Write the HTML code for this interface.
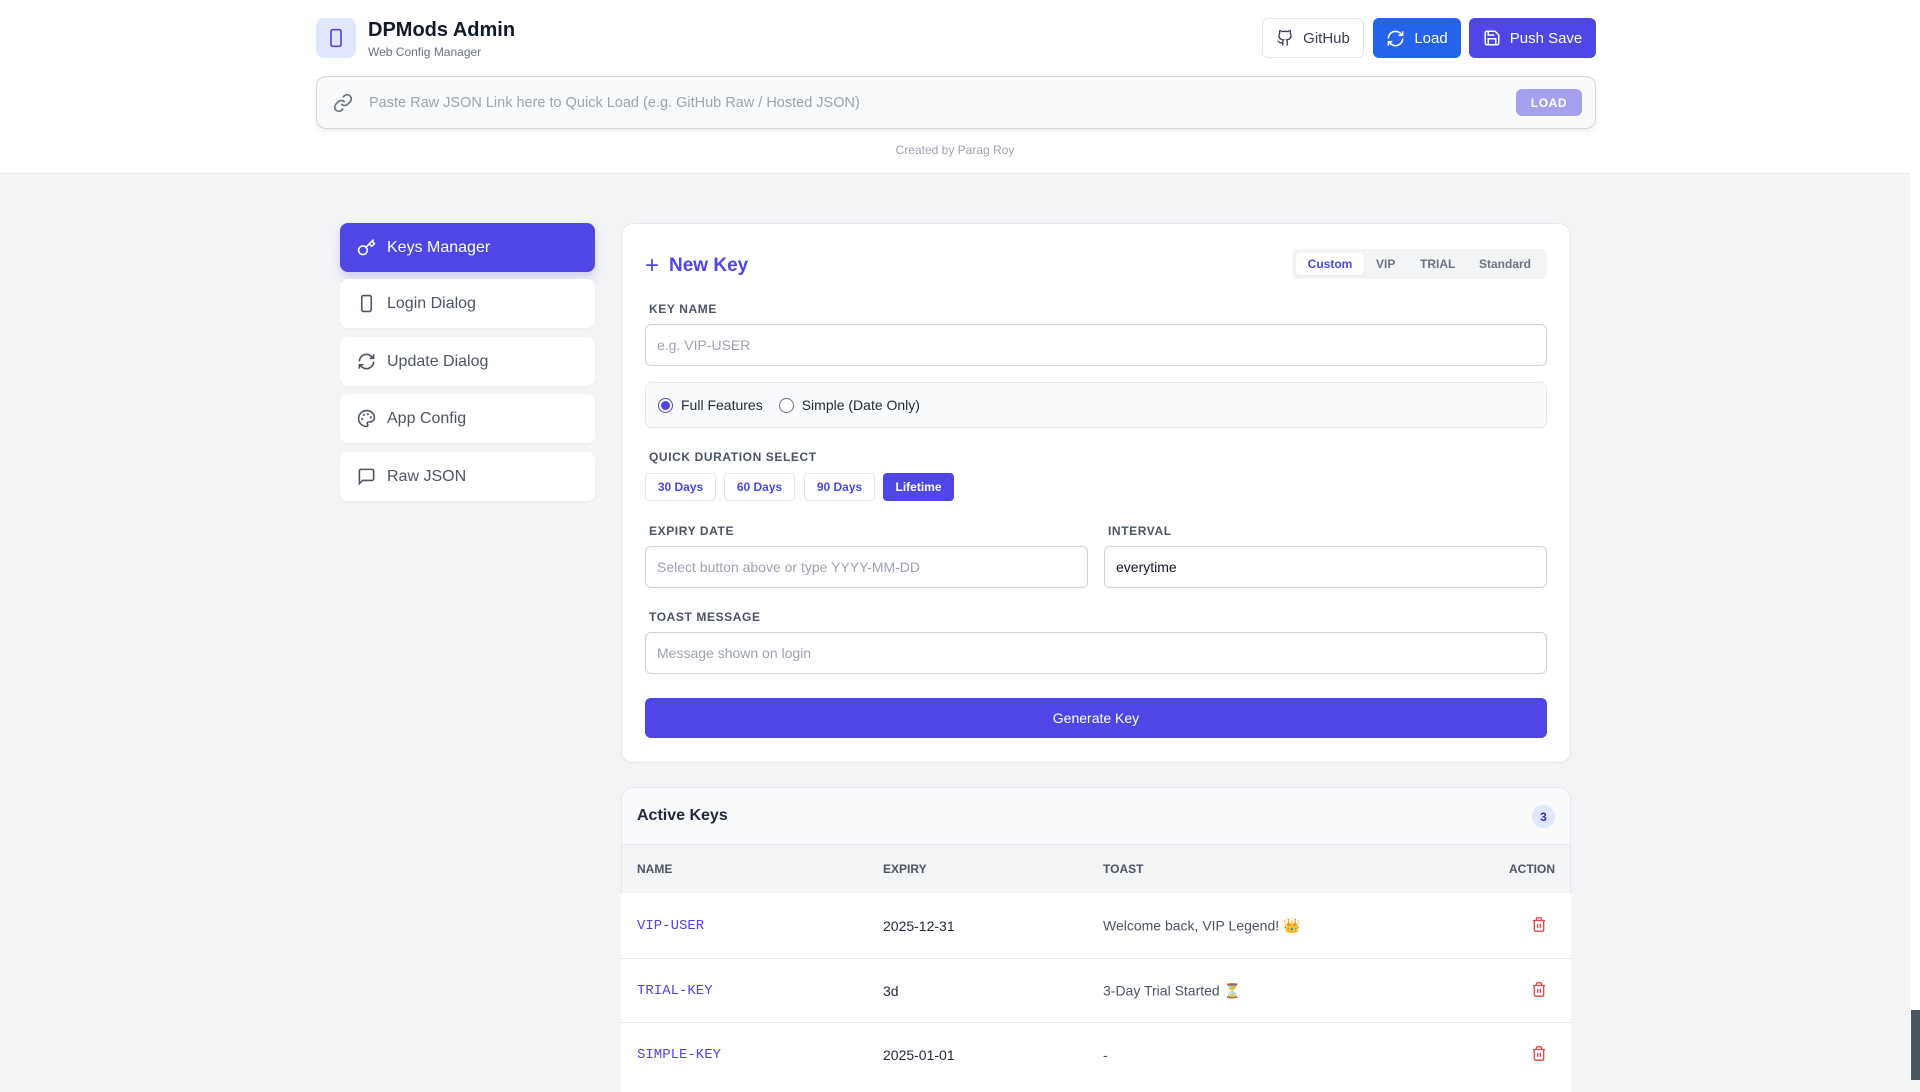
<!DOCTYPE html>
<html><head><meta charset="utf-8"><style>
*{box-sizing:border-box;margin:0;padding:0}
body{width:1920px;height:1080px;overflow:hidden;background:#f3f4f6;font-family:"Liberation Sans",sans-serif;color:#1f2937;position:relative}
.a{position:absolute}
.hdr{left:0;top:0;width:1910px;height:174px;background:#fff;border-bottom:1px solid #e5e7eb}
.sb{left:1910px;top:0;width:10px;height:1080px;background:#fff}
.sbt{left:1911px;top:1010px;width:9px;height:70px;background:#4b5563}
.btn{display:flex;align-items:center;justify-content:center;gap:9px;border-radius:6px;font-size:15px;height:40px;top:18px}
.nav{left:340px;width:255px;height:49px;background:#fff;border-radius:8px;display:flex;align-items:center;padding-left:17px;gap:11px;font-size:16px;color:#4b5563;box-shadow:0 1px 2px rgba(0,0,0,.04)}
.lbl{font-size:12px;font-weight:bold;color:#4b5563;letter-spacing:.6px}
.inp{border:1px solid #d1d5db;border-radius:6px;background:#fff;height:42px;display:flex;align-items:center;padding-left:11px;font-size:14px;color:#9ca3af}
.db{top:473px;height:28px;border:1px solid #e5e7eb;border-radius:4px;font-size:12px;font-weight:bold;color:#4f46e5;display:flex;align-items:center;justify-content:center;background:#fff}
.row{left:621px;width:950px;height:65px;background:#fff;border-top:1px solid #e5e7eb}
.row span{position:absolute;top:50%;transform:translateY(-50%);font-size:14px}
.mono{font-family:"Liberation Mono",monospace;color:#4f46e5;left:16px}
</style></head><body>
<div class="a hdr"></div>
<div class="a sb"></div><div class="a sbt"></div>
<div class="a" style="left:316px;top:18px;width:40px;height:40px;background:#e0e7ff;border-radius:8px;display:flex;align-items:center;justify-content:center">
<svg width="20" height="22" viewBox="0 0 24 24" fill="none" stroke="#4f46e5" stroke-width="2"><rect x="6" y="2" width="12" height="20" rx="2"/><path d="M12 18h.01"/></svg></div>
<div class="a" style="left:368px;top:19px;font-size:20px;font-weight:bold;color:#111827">DPMods Admin</div>
<div class="a" style="left:368px;top:45px;font-size:12px;color:#6b7280">Web Config Manager</div>

<div class="a btn" style="left:1262px;width:102px;border:1px solid #e5e7eb;background:#fff;color:#374151">
<svg width="18" height="18" viewBox="0 0 24 24" fill="none" stroke="#374151" stroke-width="1.8"><path d="M15 22v-4a4.8 4.8 0 0 0-1-3.5c3 0 6-2 6-5.5.08-1.25-.27-2.48-1-3.5.28-1.15.28-2.350 0-3.5 0 0-1 0-3 1.5-2.64-.5-5.36-.5-8 0C6 2 5 2 5 2c-.3 1.15-.3 2.35 0 3.5A5.4 5.4 0 0 0 4 9c0 3.5 3 5.5 6 5.5-.39.49-.68 1.05-.85 1.65S8.93 17.38 9 18v4"/><path d="M9 18c-4.51 2-5-2-7-2"/></svg>GitHub</div>
<div class="a btn" style="left:1373px;width:88px;background:#2563eb;color:#fff">
<svg width="19" height="19" viewBox="0 0 24 24" fill="none" stroke="#fff" stroke-width="2"><path d="M3 12a9 9 0 0 1 15-6.7L21 8"/><path d="M21 3v5h-5"/><path d="M21 12a9 9 0 0 1-15 6.7L3 16"/><path d="M8 16H3v5"/></svg>Load</div>
<div class="a btn" style="left:1469px;width:127px;background:#4f46e5;color:#fff">
<svg width="18" height="18" viewBox="0 0 24 24" fill="none" stroke="#fff" stroke-width="2"><path d="M19 21H5a2 2 0 0 1-2-2V5a2 2 0 0 1 2-2h11l5 5v11a2 2 0 0 1-2 2z"/><path d="M17 21v-8H7v8M7 3v5h8"/></svg>Push Save</div>

<div class="a" style="left:316px;top:76px;width:1280px;height:53px;background:#f9fafb;border:1px solid #d1d5db;border-radius:10px;box-shadow:0 2px 4px rgba(0,0,0,.08)"></div>
<svg class="a" style="left:333px;top:93px" width="20" height="20" viewBox="0 0 24 24" fill="none" stroke="#6b7280" stroke-width="2"><path d="M10 13a5 5 0 0 0 7.54.54l3-3a5 5 0 0 0-7.07-7.07l-1.72 1.71"/><path d="M14 11a5 5 0 0 0-7.54-.54l-3 3a5 5 0 0 0 7.07 7.07l1.71-1.71"/></svg>
<div class="a" style="left:369px;top:95px;font-size:14.5px;color:#9ca3af">Paste Raw JSON Link here to Quick Load (e.g. GitHub Raw / Hosted JSON)</div>
<div class="a" style="left:1516px;top:89px;width:66px;height:27px;background:#a5a0ee;border-radius:6px;color:#fff;font-size:12px;font-weight:bold;letter-spacing:.6px;display:flex;align-items:center;justify-content:center">LOAD</div>
<div class="a" style="left:0;width:1910px;top:143px;text-align:center;font-size:12px;color:#9ca3af">Created by Parag Roy</div>

<div class="a nav" style="top:223px;background:#4f46e5;color:#fff;box-shadow:0 6px 10px rgba(79,70,229,.2)">
<svg width="19" height="19" viewBox="0 0 24 24" fill="none" stroke="#fff" stroke-width="2"><circle cx="7.5" cy="15.5" r="5.5"/><path d="M21 2l-9.6 9.6M15.5 7.5l3 3L22 7l-3-3"/></svg>Keys Manager</div>
<div class="a nav" style="top:279px"><svg width="19" height="19" viewBox="0 0 24 24" fill="none" stroke="#4b5563" stroke-width="2"><rect x="6" y="2" width="12" height="20" rx="2"/><path d="M12 18h.01"/></svg>Login Dialog</div>
<div class="a nav" style="top:337px"><svg width="19" height="19" viewBox="0 0 24 24" fill="none" stroke="#4b5563" stroke-width="2"><path d="M3 12a9 9 0 0 1 15-6.7L21 8"/><path d="M21 3v5h-5"/><path d="M21 12a9 9 0 0 1-15 6.7L3 16"/><path d="M8 16H3v5"/></svg>Update Dialog</div>
<div class="a nav" style="top:394px"><svg width="19" height="19" viewBox="0 0 24 24" fill="none" stroke="#4b5563" stroke-width="2"><circle cx="13.5" cy="6.5" r=".5"/><circle cx="17.5" cy="10.5" r=".5"/><circle cx="8.5" cy="7.5" r=".5"/><circle cx="6.5" cy="12.5" r=".5"/><path d="M12 2C6.5 2 2 6.5 2 12s4.5 10 10 10c.9 0 1.6-.7 1.6-1.7 0-.4-.2-.8-.4-1.1-.3-.3-.4-.7-.4-1.1a1.6 1.6 0 0 1 1.6-1.7h2c3.1 0 5.6-2.5 5.6-5.6C22 6 17.5 2 12 2z"/></svg>App Config</div>
<div class="a nav" style="top:452px"><svg width="19" height="19" viewBox="0 0 24 24" fill="none" stroke="#4b5563" stroke-width="2"><path d="M21 15a2 2 0 0 1-2 2H7l-4 4V5a2 2 0 0 1 2-2h14a2 2 0 0 1 2 2z"/></svg>Raw JSON</div>

<div class="a" style="left:621px;top:223px;width:950px;height:540px;background:#fff;border:1px solid #e5e7eb;border-radius:12px"></div>
<div class="a" style="left:645px;top:252px;font-size:19px;font-weight:bold;color:#4f46e5;display:flex;align-items:center;gap:10px"><span style="font-size:24px;font-weight:normal">+</span>New Key</div>
<div class="a" style="left:1292px;top:249px;width:255px;height:30px;background:#f3f4f6;border-radius:6px"></div>
<div class="a" style="left:1296px;top:253px;width:68px;height:22px;background:#fff;border-radius:4px;box-shadow:0 1px 2px rgba(0,0,0,.06)"></div>
<div class="a" style="left:1296px;top:257px;width:68px;text-align:center;font-size:12px;font-weight:bold;color:#4f46e5">Custom</div>
<div class="a" style="left:1376px;top:257px;font-size:12px;font-weight:bold;color:#6b7280">VIP</div>
<div class="a" style="left:1420px;top:257px;font-size:12px;font-weight:bold;color:#6b7280">TRIAL</div>
<div class="a" style="left:1479px;top:257px;font-size:12px;font-weight:bold;color:#6b7280">Standard</div>

<div class="a lbl" style="left:649px;top:302px">KEY NAME</div>
<div class="a inp" style="left:645px;top:324px;width:902px">e.g. VIP-USER</div>
<div class="a" style="left:645px;top:382px;width:902px;height:46px;background:#f9fafb;border:1px solid #e5e7eb;border-radius:6px;display:flex;align-items:center;padding-left:12px;font-size:14px;color:#1f2937">
<span style="width:15px;height:15px;border-radius:50%;border:1.5px solid #4f46e5;display:inline-flex;align-items:center;justify-content:center;margin-right:8px"><span style="width:9px;height:9px;border-radius:50%;background:#4f46e5"></span></span>Full Features
<span style="width:15px;height:15px;border-radius:50%;border:1.5px solid #6b7280;display:inline-block;margin:0 8px 0 16px;background:#fff"></span>Simple (Date Only)</div>

<div class="a lbl" style="left:649px;top:450px">QUICK DURATION SELECT</div>
<div class="a db" style="left:645px;width:71px">30 Days</div>
<div class="a db" style="left:724px;width:71px">60 Days</div>
<div class="a db" style="left:804px;width:71px">90 Days</div>
<div class="a db" style="left:883px;width:71px;background:#4f46e5;border-color:#4f46e5;color:#fff">Lifetime</div>

<div class="a lbl" style="left:649px;top:524px">EXPIRY DATE</div>
<div class="a lbl" style="left:1108px;top:524px">INTERVAL</div>
<div class="a inp" style="left:645px;top:546px;width:443px">Select button above or type YYYY-MM-DD</div>
<div class="a inp" style="left:1104px;top:546px;width:443px;color:#111827">everytime</div>
<div class="a lbl" style="left:649px;top:610px">TOAST MESSAGE</div>
<div class="a inp" style="left:645px;top:632px;width:902px">Message shown on login</div>
<div class="a" style="left:645px;top:698px;width:902px;height:40px;background:#4f46e5;border-radius:6px;color:#fff;font-size:14px;display:flex;align-items:center;justify-content:center">Generate Key</div>

<div class="a" style="left:621px;top:787px;width:950px;height:300px;background:#fff;border:1px solid #e5e7eb;border-radius:12px;overflow:hidden">
<div style="height:57px;background:#f9fafb;border-bottom:1px solid #e5e7eb;position:relative">
<span style="position:absolute;left:15px;top:19px;font-size:16px;font-weight:bold;color:#1f2937">Active Keys</span>
<span style="position:absolute;right:15px;top:17px;width:23px;height:23px;border-radius:50%;background:#e0e7ff;color:#3730a3;font-size:12px;font-weight:bold;display:flex;align-items:center;justify-content:center">3</span></div>
<div style="height:49px;background:#f3f4f6;position:relative;font-size:12px;font-weight:bold;color:#4b5563">
<span style="position:absolute;left:15px;top:17px">NAME</span><span style="position:absolute;left:261px;top:17px">EXPIRY</span><span style="position:absolute;left:481px;top:17px">TOAST</span><span style="position:absolute;right:15px;top:17px">ACTION</span></div>
</div>
<div class="a row" style="top:893px;border-top:none"><span class="mono">VIP-USER</span><span style="left:262px">2025-12-31</span><span style="left:482px;color:#4b5563">Welcome back, VIP Legend! 👑</span><span style="left:910px"><svg width="16" height="17" viewBox="0 0 24 24" fill="none" stroke="#ef4444" stroke-width="2"><path d="M3 6h18M19 6v14a2 2 0 0 1-2 2H7a2 2 0 0 1-2-2V6M8 6V4a2 2 0 0 1 2-2h4a2 2 0 0 1 2 2v2M10 11v6M14 11v6"/></svg></span></div>
<div class="a row" style="top:958px"><span class="mono">TRIAL-KEY</span><span style="left:262px">3d</span><span style="left:482px;color:#4b5563">3-Day Trial Started ⏳</span><span style="left:910px"><svg width="16" height="17" viewBox="0 0 24 24" fill="none" stroke="#ef4444" stroke-width="2"><path d="M3 6h18M19 6v14a2 2 0 0 1-2 2H7a2 2 0 0 1-2-2V6M8 6V4a2 2 0 0 1 2-2h4a2 2 0 0 1 2 2v2M10 11v6M14 11v6"/></svg></span></div>
<div class="a row" style="top:1022px;height:70px"><span class="mono" style="top:32px">SIMPLE-KEY</span><span style="left:262px;top:32px">2025-01-01</span><span style="left:482px;top:32px;color:#4b5563">-</span><span style="left:910px;top:32px"><svg width="16" height="17" viewBox="0 0 24 24" fill="none" stroke="#ef4444" stroke-width="2"><path d="M3 6h18M19 6v14a2 2 0 0 1-2 2H7a2 2 0 0 1-2-2V6M8 6V4a2 2 0 0 1 2-2h4a2 2 0 0 1 2 2v2M10 11v6M14 11v6"/></svg></span></div>
</body></html>
